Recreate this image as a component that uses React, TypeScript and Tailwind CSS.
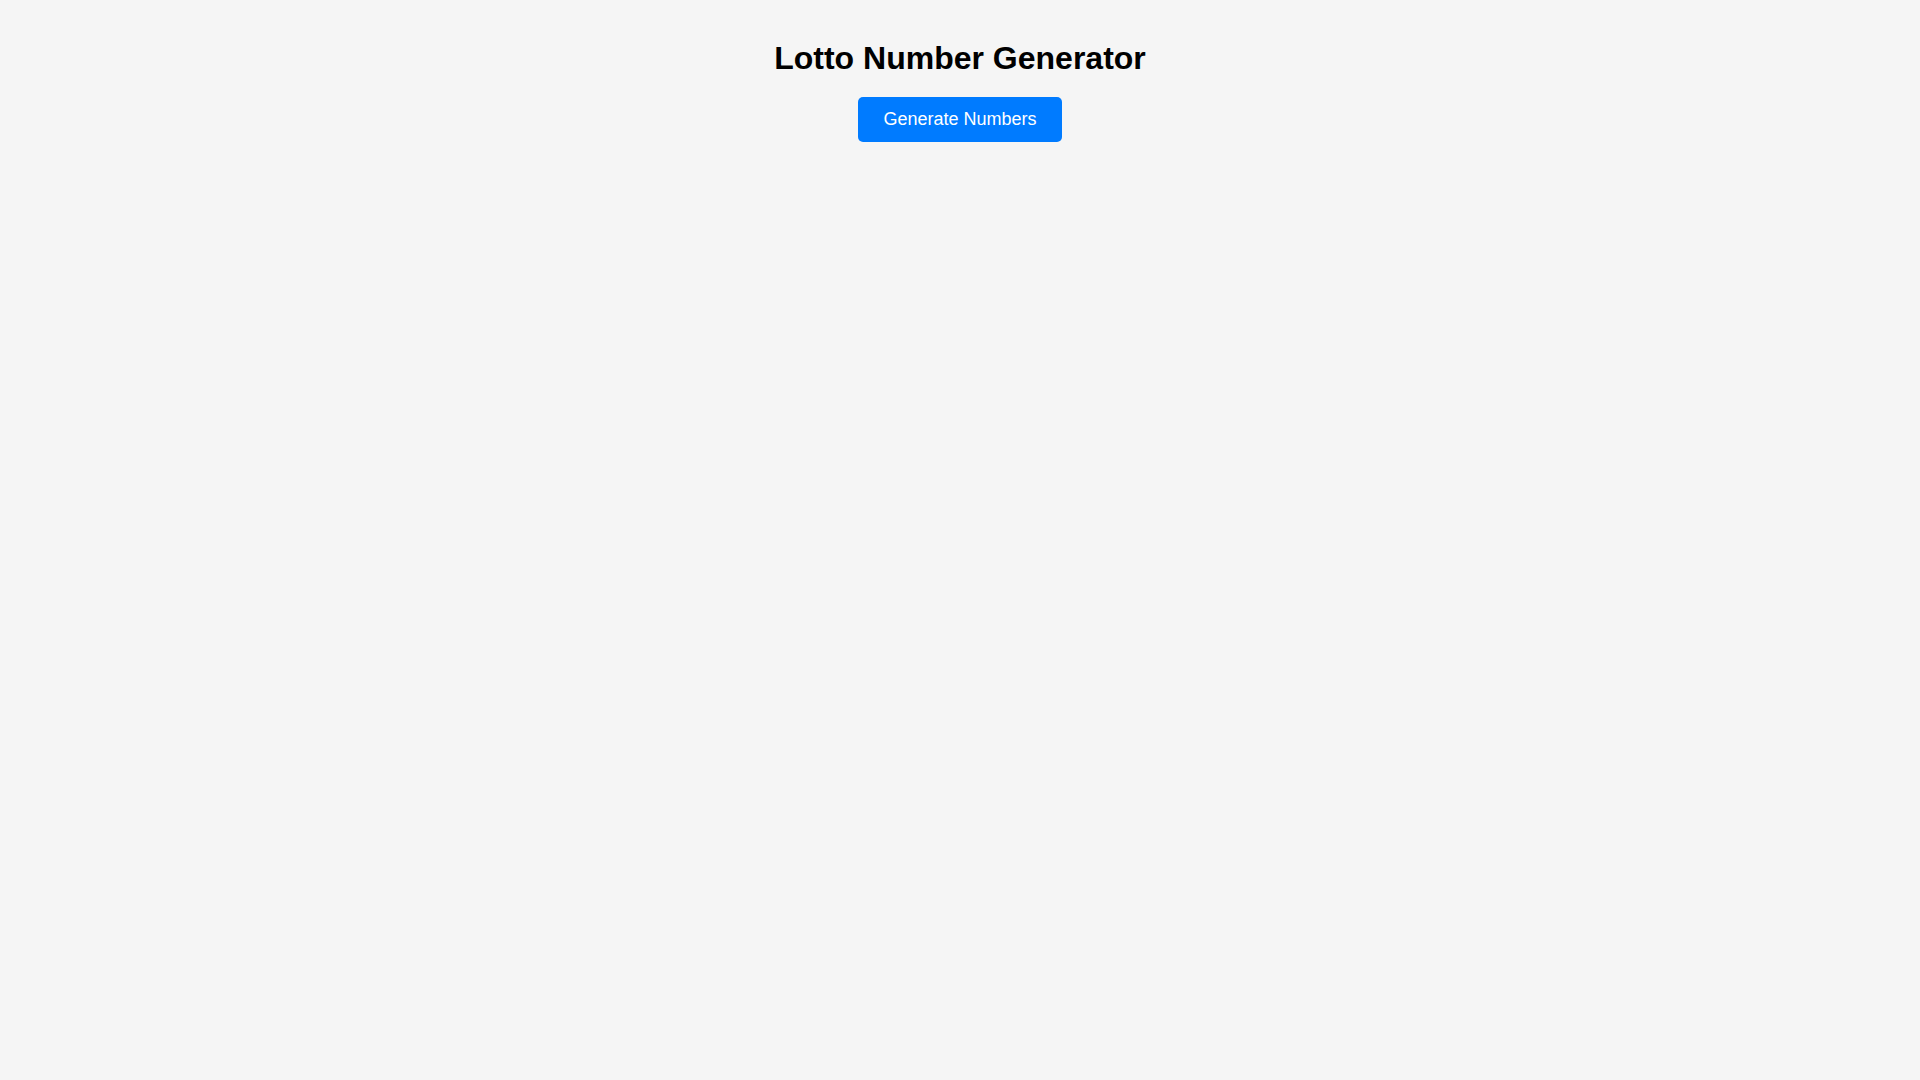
import React, { useState } from "react";

export default function App() {
  const [numbers, setNumbers] = useState<number[]>([]);

  const generate = () => {
    const pool = new Set<number>();
    while (pool.size < 6) pool.add(Math.floor(Math.random() * 45) + 1);
    setNumbers([...pool].sort((a, b) => a - b));
  };

  return (
    <div className="min-h-screen bg-[#f5f5f5] flex flex-col items-center pt-[40px] font-['Liberation_Sans',Arial,sans-serif] text-black">
      <h1 className="text-[32px] leading-[37px] font-bold mb-5">Lotto Number Generator</h1>
      <button
        onClick={generate}
        className="bg-[#007bff] text-white text-[18px] leading-[21px] px-[25px] py-3 rounded-[5px] cursor-pointer"
      >
        Generate Numbers
      </button>
      {numbers.length > 0 && (
        <div className="flex gap-3 mt-6">
          {numbers.map((n) => (
            <div
              key={n}
              className="w-12 h-12 rounded-full bg-white shadow flex items-center justify-center text-lg font-bold"
            >
              {n}
            </div>
          ))}
        </div>
      )}
    </div>
  );
}
